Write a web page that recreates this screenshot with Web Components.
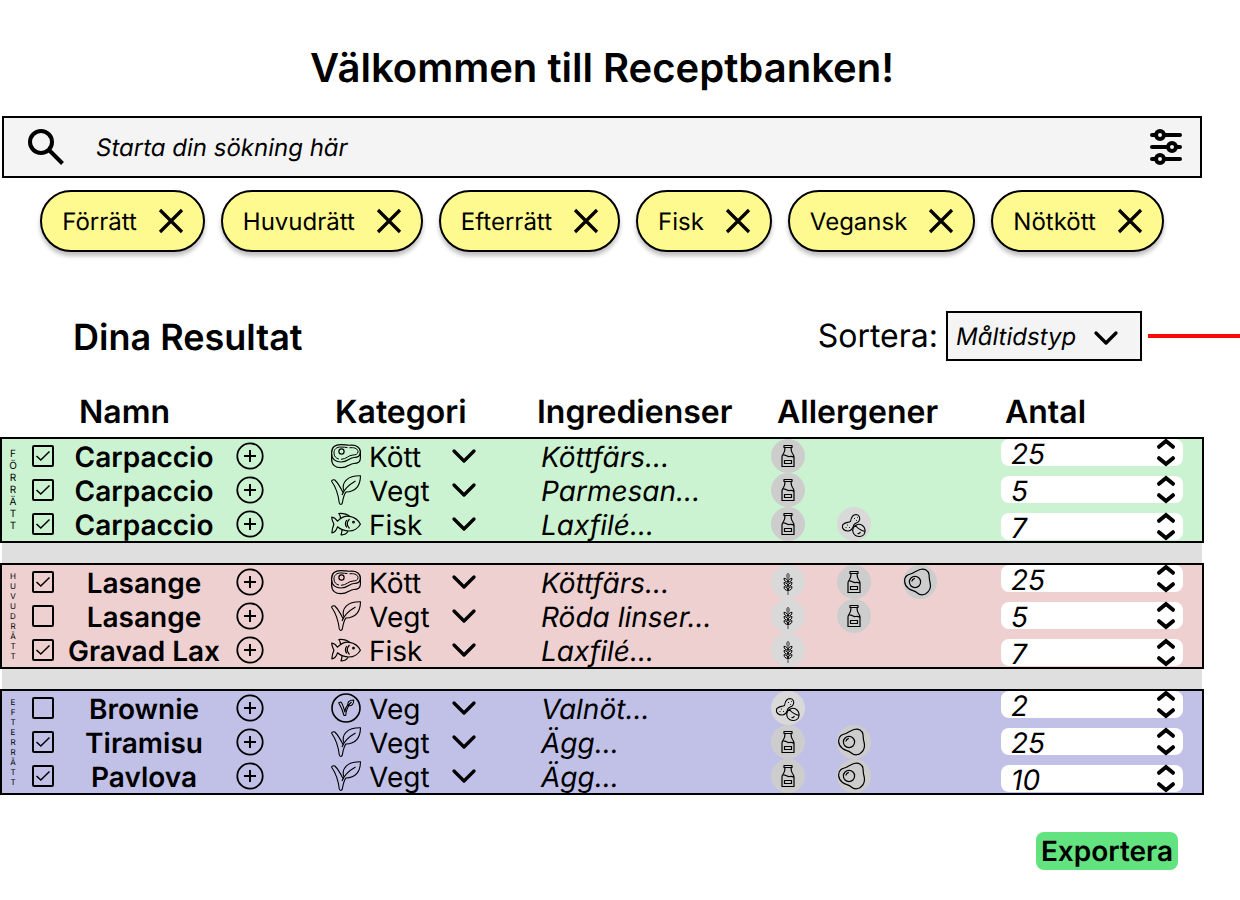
<!DOCTYPE html>
<html lang="sv">
<head>
<meta charset="utf-8">
<meta name="viewport" content="width=device-width, initial-scale=1">
<title>Receptbanken</title>
<style>
  body { margin: 0; background: #fff; color: #000; font-family: Inter, "Liberation Sans", sans-serif; text-rendering: geometricPrecision; }
</style>
</head>
<body>
<recipe-app></recipe-app>

<script>
const BASE = `
  *, *::before, *::after { box-sizing: border-box; }
  button, input, select { font: inherit; color: inherit; text-rendering: inherit; margin: 0; padding: 0; border: 0; background: none; border-radius: 0; }
  button { cursor: pointer; }
  h1, h2 { margin: 0; font-weight: 600; }
`;

function define(name, render) {
  customElements.define(name, class extends HTMLElement {
    connectedCallback() {
      if (this.shadowRoot) return;
      const root = this.attachShadow({ mode: 'open' });
      const tpl = document.createElement('template');
      tpl.innerHTML = render(this);
      root.append(tpl.content.cloneNode(true));
    }
  });
}

/* name: [width, height, stroke width, shapes] */
const ICONS = {
  search: [36, 36, 4, '<circle cx="13" cy="13" r="11"/><path d="M21 21 34.500 34.500"/>'],
  filter: [32, 36, 4, '<g stroke-linecap="round"><path d="M2 6h4M14 6h16M2 18h16M26 18h4M2 30h4M14 30h16"/></g><circle cx="10" cy="6" r="4"/><circle cx="22" cy="18" r="4"/><circle cx="10" cy="30" r="4"/>'],
  close: [24, 24, 3.2, '<path d="M1 1 23 23M23 1 1 23"/>'],
  chevron: [24, 14, 3.3, '<path d="M2 2 12 12 22 2" stroke-linecap="round"/>'],
  up: [18, 10, 4, '<path d="M2 7.800 9 2 16 7.800" stroke-linecap="round" stroke-linejoin="miter"/>'],
  down: [18, 10, 4, '<path d="M2 2.200 9 8 16 2.200" stroke-linecap="round" stroke-linejoin="miter"/>'],
  plus: [28, 28, 1.8, '<circle cx="14" cy="14" r="12.700"/><path d="M14 8v12M8 14h12" stroke-width="2"/>'],
  meat: [30, 30, 1.2, '<path d="M.6 12C.6 6 4 3.500 10 3.600c4 0 6 1 10 .6 5-.4 9.400 2 9.400 6.800v6c0 4-3 5.500-6.500 5.500-4.500 0-6 4.200-13 4.200C4.500 26.700.6 24 .6 18Z"/><path d="M.6 13c0 5 4 8 9.500 8 7 0 8-4.500 13-4.500 4 0 6.300-2 6.300-5.500"/><path d="M3 12c0-4 2.500-6 7-6 4 0 6.500 1 10 .7 4-.3 7 1.300 7 4 0 2.500-2.500 3.300-5 3.300-4.500 0-6.500 4.300-12 4.300-4 0-7-2.300-7-6.300Z" stroke-width="1" stroke-dasharray="17 2 30 2"/><circle cx="10.500" cy="10.500" r="2.600"/>'],
  leaf: [30, 30, 1.1, '<path d="M12 17.500C9.500 12.500 7 8 3.800 5c-.8-.6-3.600.4-3.200 1.300C4 11 7.300 20 8.300 28c.4 1.800 2.500 1.800 3 0 .8-4.800 1.500-8.500 3.700-11.200"/><path d="M11 20C13 14.500 17.500 10 24.500 6"/><path d="M12.700 15.500C10.500 7.500 16 .5 29.500.7c-.2 10-4.500 16-14.500 16.300"/>'],
  fish: [30, 30, 1.2, '<path d="M.7 8c2 .2 4.300 1.800 5.800 4.200C11 7.500 15 6.800 18.500 7.300c5 .7 9 4.200 10.900 7.900-2 3.500-6.500 6.800-11.400 6.800-4 0-8-1.200-11.500-4.200-1 3.500-3 5.500-5.600 6 .1-3.500.6-5.300 2-8.600C1.800 13 .7 11 .7 8Z"/><path d="M9.500 9.500C9.600 7.500 9 6 7.800 4.500c4.500-.3 8.500.8 10.700 2.700M11 21c-.2 2-.2 3-1 4.800 3 .3 5.500-1 7-3.500M18.500 10c-2.800 3-2.800 6.500 0 9.500M15.800 11c-1.800 2.500-1.800 5 0 7.500"/><circle cx="22.500" cy="13.200" r=".8"/>'],
  vegan: [30, 30, 1.6, '<circle cx="15" cy="15" r="14"/><g stroke-width="1.100"><path d="M13.800 19C13 15.500 11.800 11.500 10 9l-2.300.7C10 13.500 11.800 18 13 22.500h1.700c.5-4.500 1.500-7.500 3-9.500l-1-1.200c-1.500 1.700-2.400 4-2.900 7.200Z"/><path d="M17 12.500c-1-3 1-5.500 5.700-5.500 0 4-1.700 6.500-5.700 5.500ZM17 12.500l3.500-3.500"/></g>'],
  milk: [34, 34, 1.2, '<path d="M13 6.500h8v2h-8ZM14 8.500c0 3-.5 4.500-1.500 6-.8 1-1.500 2-1.500 3.500v9.500h12V18c0-1.500-.7-2.500-1.500-3.500-1-1.500-1.500-3-1.500-6M11.500 16c3-1 4.500 2 7 1.500 1.500-.3 3-.2 4.300.8M13.500 21.500h7v3h-7Z"/>'],
  nuts: [34, 34, 1.1, '<path d="M13.500 14.500c.5-3 2-7 5.500-7 3.500.2 4.700 4 3 6.500-1.500 2.200-4.300 2-5.200 4-.8 3-1.800 5.500-5.300 6-4 .3-6.800-2.500-6-5.500 1-3.200 5.500-2.700 8-4Z"/><path d="M16.500 20.500c2-3.500 6-4 9-2 3 2.200 3.300 6.500 1.500 9-2 2.500-6 2.500-8.500 1-2.700-1.700-3.500-5.300-2-8ZM18.500 18.500c2.500 3.500 5.500 5 9.500 6M20.500 26.500c1 .2 2.500-.5 3-1.500"/><path d="M17 11.500h1M20 10.500h.8M19 13.500h.8M10 18h1M12 20.500h1M8.500 20.500h1" stroke-width=".9"/>'],
  wheat: [34, 34, 1, '<path d="M17 10v20" stroke="#777" stroke-width="1.500"/><path d="M17 8c-2 2-2 4 0 5.500C19 12 19 10 17 8Z" fill="#888" stroke="#666"/><path d="M17 17c0-2-1.500-3.500-4-3.700 0 2.500 1.500 3.700 4 3.700s4-1.200 4-3.700c-2.500.2-4 1.700-4 3.700ZM17 21.200c0-2-1.500-3.500-4-3.700 0 2.500 1.500 3.700 4 3.700s4-1.200 4-3.700c-2.500.2-4 1.700-4 3.700ZM17 25.400c0-2-1.500-3.500-4-3.700 0 2.500 1.500 3.700 4 3.700s4-1.200 4-3.700c-2.500.2-4 1.700-4 3.700Z"/>'],
  egg: [34, 34, 1.2, '<path d="M17 4.500c4.500-1.300 8.500 1 9 5 .4 3 0 4.500 1 7.500 1.300 5-.5 9.500-4.500 12-3.500 1.500-6.500.5-8.500-1.300-2.500-2.300-5.500-1.700-8.500-4.200C1 20 .3 13.500 4 10.500c2-1.600 4-1.300 6-2.500 2.500-1.400 4.500-2.800 7-3.500Z"/><circle cx="12" cy="17" r="5.600"/><path d="M8.800 16.500c.3-1.800 1.300-2.800 3-3.200"/>'],
};

define('rb-icon', el => {
  const [w, h, s, shapes] = ICONS[el.getAttribute('name')];
  return `<style>:host { display: block; flex: none; width: ${w}px; height: ${h}px; } svg { display: block; overflow: visible; }</style>
    <svg width="${w}" height="${h}" viewBox="0 0 ${w} ${h}" fill="none" stroke="#000" stroke-width="${s}" stroke-linejoin="round" aria-hidden="true">${shapes}</svg>`;
});

define('search-bar', () => `<style>${BASE}
  :host { display: flex; align-items: center; height: 62px; padding: 0 18px 0 24px; border: 2px solid #000; background: #f4f4f4; }
  input { flex: 1; min-width: 0; height: 100%; margin: 0 32px; font-size: 24px; font-style: italic; outline: none; }
  input::placeholder { color: #000; opacity: 1; }
</style>
<rb-icon name="search"></rb-icon>
<input type="search" placeholder="Starta din sökning här" aria-label="Sök recept">
<button type="button" aria-label="Filter"><rb-icon name="filter"></rb-icon></button>`);

define('filter-chip', () => `<style>${BASE}
  :host { display: flex; align-items: center; gap: 22px; height: 62px; padding: 0 20px; border: 2px solid #000; border-radius: 31px;
    background: #fffa8f; box-shadow: 0 4px 4px rgb(0 0 0 / 25%); font-size: 24px; line-height: 30px; }
  span { padding-top: 2px; }
</style>
<span><slot></slot></span>
<button type="button" aria-label="Ta bort"><rb-icon name="close"></rb-icon></button>`);

define('sort-select', () => `<style>${BASE}
  :host { display: flex; align-items: center; gap: 8px; }
  label { font-size: 32px; line-height: 40px; }
  .box { display: grid; width: 196px; height: 50px; border: 2px solid #000; background: #f4f4f4; }
  .box > * { grid-area: 1 / 1; }
  select { appearance: none; padding: 0 8px; font-size: 24px; font-style: italic; }
  rb-icon { place-self: center end; margin: 4px 22px 0 0; pointer-events: none; }
</style>
<label for="sort">Sortera:</label>
<div class="box">
  <select id="sort"><option>Måltidstyp</option><option>Namn</option><option>Kategori</option></select>
  <rb-icon name="chevron"></rb-icon>
</div>`);

define('category-select', el => {
  const value = el.getAttribute('value');
  const options = ['Kött', 'Vegt', 'Fisk', 'Veg'].map(o => `<option${o === value ? ' selected' : ''}>${o}</option>`).join('');
  return `<style>${BASE}
  :host { display: flex; align-items: center; gap: 8px; }
  .box { display: grid; grid-template-rows: 34px; width: 107px; }
  .box > * { grid-area: 1 / 1; min-width: 0; }
  select { appearance: none; width: 100%; height: 34px; padding-top: 2px; font-size: 28px; line-height: 32px; }
  .arrow { place-self: center end; pointer-events: none; }
</style>
<rb-icon name="${el.getAttribute('icon')}"></rb-icon>
<div class="box">
  <select aria-label="Kategori">${options}</select>
  <rb-icon class="arrow" name="chevron"></rb-icon>
</div>`;
});

define('allergen-badge', el => {
  const kind = el.getAttribute('kind');
  const dark = kind === 'milk' || kind === 'egg';
  return `<style>:host { display: block; width: 34px; height: 34px; border-radius: 50%; background: ${dark ? '#cdcdcd' : '#d9d9d9'}; }</style>
    <rb-icon name="${kind}"></rb-icon>`;
});

define('quantity-input', el => `<style>${BASE}
  :host { display: flex; height: 27px; padding: 0 8px 0 10px; border-radius: 8px; background: #fff; }
  input { flex: 1; min-width: 0; height: 27px; padding-top: 2px; font-size: 28px; line-height: 25px; font-style: italic; outline: none; }
  .steps { display: flex; flex-direction: column; justify-content: space-between; }
  button { display: block; height: 10px; }
</style>
<input type="text" inputmode="numeric" value="${el.getAttribute('value')}" aria-label="Antal">
<div class="steps">
  <button type="button" aria-label="Öka"><rb-icon name="up"></rb-icon></button>
  <button type="button" aria-label="Minska"><rb-icon name="down"></rb-icon></button>
</div>`);

const GROUPS = [
  { label: 'FÖRRÄTT', tone: 'starter', rows: [
    [true, 'Carpaccio', 'meat', 'Kött', 'Köttfärs...', ['milk'], 25],
    [true, 'Carpaccio', 'leaf', 'Vegt', 'Parmesan...', ['milk'], 5],
    [true, 'Carpaccio', 'fish', 'Fisk', 'Laxfilé...', ['milk', 'nuts'], 7] ] },
  { label: 'HUVUDRÄTT', tone: 'main', rows: [
    [true, 'Lasange', 'meat', 'Kött', 'Köttfärs...', ['wheat', 'milk', 'egg'], 25],
    [false, 'Lasange', 'leaf', 'Vegt', 'Röda linser...', ['wheat', 'milk'], 5],
    [true, 'Gravad Lax', 'fish', 'Fisk', 'Laxfilé...', ['wheat'], 7] ] },
  { label: 'EFTERRÄTT', tone: 'dessert', rows: [
    [false, 'Brownie', 'vegan', 'Veg', 'Valnöt...', ['nuts'], 2],
    [true, 'Tiramisu', 'leaf', 'Vegt', 'Ägg...', ['milk', 'egg'], 25],
    [true, 'Pavlova', 'leaf', 'Vegt', 'Ägg...', ['milk', 'egg'], 10] ] },
];

function renderGroup(group) {
  const n = group.rows.length;
  const rows = group.rows.map(([checked, name, icon, category, ingredients, allergens], i) => `<tr>
    ${i === 0 ? `<th class="meal" scope="rowgroup" rowspan="${n}">${group.label}</th>` : ''}
    <td class="pick"><input type="checkbox" aria-label="Välj ${name}"${checked ? ' checked' : ''}></td>
    <th class="name" scope="row">${name}</th>
    <td class="add"><button type="button" aria-label="Lägg till ${name}"><rb-icon name="plus"></rb-icon></button></td>
    <td><category-select icon="${icon}" value="${category}"></category-select></td>
    <td class="ingredients">${ingredients}</td>
    <td class="allergens">${allergens.map(a => `<allergen-badge kind="${a}"></allergen-badge>`).join('')}</td>
    ${i === 0 ? `<td class="amounts" rowspan="${n}">${group.rows.map(r => `<quantity-input value="${r[6]}"></quantity-input>`).join('')}</td>` : ''}
  </tr>`).join('');
  return `<tbody class="${group.tone}">${rows}</tbody>`;
}

define('recipe-table', () => `<style>${BASE}
  :host { display: block; }
  table { display: block; }
  tr { display: contents; }
  th, td { padding: 0; text-align: left; }
  thead { display: grid; grid-template-columns: 256fr 202fr 240fr 228fr 199fr; padding: 0 0 4px 79px; font-size: 32px; line-height: 42px; }
  thead th { font-weight: 600; }
  tbody { display: grid; grid-template-columns: 22px 38px 164px minmax(0, 105fr) minmax(0, 210fr) minmax(0, 230fr) minmax(0, 230fr) minmax(0, 201fr);
    grid-auto-rows: 34px; border: 2px solid #000; font-size: 28px; line-height: 32px; }
  tbody + tbody { margin-top: 20px; }
  tbody td, tbody th { display: flex; align-items: center; white-space: nowrap; }
  .starter { background: #ccf3d1; }
  .main { background: #eed0d0; }
  .dessert { background: #c1c1e7; }
  .starter, .main { box-shadow: 0 22px 0 -2px #dfdfdf; }
  .main, .dessert { position: relative; }
  .meal { grid-row: 1 / span 3; grid-column: 1; justify-content: center; writing-mode: vertical-rl; text-orientation: upright; font-size: 8px; line-height: 22px; font-weight: 400; }
  .starter .meal { font-size: 10px; }
  .pick { grid-column: 2; justify-content: center; }
  tbody .name, tbody .ingredients { padding-top: 2px; }
  .name { grid-column: 3; justify-content: center; font-weight: 600; }
  tbody .add { padding-left: 10px; }
  .ingredients { font-style: italic; }
  .allergens { gap: 32px; }
  .amounts { grid-row: 1 / span 3; grid-column: 8; flex-direction: column; gap: 10px; padding-right: 19px; }
  tbody .amounts { align-items: stretch; }
  input { appearance: none; width: 22px; height: 22px; border: 2px solid #000; border-radius: 2px; }
  input:checked { background: url("data:image/svg+xml,%3Csvg xmlns='http://www.w3.org/2000/svg' viewBox='0 0 18 18'%3E%3Cpath d='M2.500 9 6.800 13 15.500 4.500' fill='none' stroke='%23000' stroke-width='1.500'/%3E%3C/svg%3E") center / 18px 18px no-repeat; }
</style>
<table>
  <thead><tr>
    <th scope="col" colspan="4">Namn</th><th scope="col">Kategori</th><th scope="col">Ingredienser</th><th scope="col">Allergener</th><th scope="col">Antal</th>
  </tr></thead>
  ${GROUPS.map(renderGroup).join('')}
</table>`);

define('recipe-app', () => `<style>${BASE}
  :host { display: block; padding-bottom: 30px; }
  main, .frame { display: block; }
  .frame { margin-right: 36px; }
  h1 { padding: 44px 0 24px; text-align: center; font-size: 40px; line-height: 48px; }
  search-bar { margin: 0 2px; }
  .chips { display: flex; flex-wrap: wrap; justify-content: center; gap: 16px; padding-top: 12px; }
  .results { display: flex; align-items: center; padding: 59px 0 30px 73px; }
  h2 { flex: 1; padding-top: 2px; font-size: 36px; line-height: 44px; }
  .arrow { flex: none; width: 92px; height: 4px; margin-left: 6px; background: #ff0707; }
  .actions { display: flex; justify-content: flex-end; padding: 37px 26px 0 0; }
  .export { height: 38px; padding: 0 5px; border-radius: 8px; background: #62e37f; font-size: 28px; line-height: 36px; font-weight: 600; }
</style>
<main>
  <div class="frame">
    <h1>Välkommen till Receptbanken!</h1>
    <search-bar></search-bar>
    <div class="chips">
      ${['Förrätt', 'Huvudrätt', 'Efterrätt', 'Fisk', 'Vegansk', 'Nötkött'].map(t => `<filter-chip>${t}</filter-chip>`).join('')}
    </div>
  </div>
  <div class="results">
    <h2>Dina Resultat</h2>
    <sort-select></sort-select>
    <div class="arrow"></div>
  </div>
  <div class="frame">
    <recipe-table></recipe-table>
    <div class="actions"><button class="export" type="button">Exportera</button></div>
  </div>
</main>`);
</script>
</body>
</html>
